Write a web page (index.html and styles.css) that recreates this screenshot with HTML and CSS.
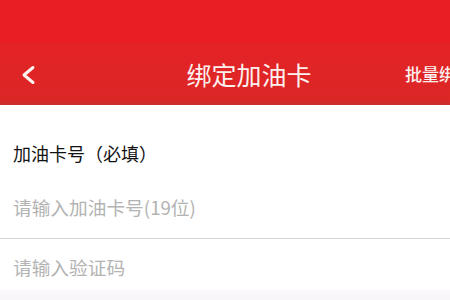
FILE: index.html
```html
<!DOCTYPE html>
<html lang="zh-CN">
<head>
<meta charset="utf-8">
<title>绑定加油卡</title>
<link rel="stylesheet" href="styles.css">
</head>
<body>
<div class="screen">
  <header class="header">
    <div class="status"></div>
    <nav class="nav">
      <div class="back">
        <svg width="16" height="20" viewBox="0 0 16 20" aria-hidden="true">
          <polyline points="13,2.5 4,10 13,17.5" fill="none" stroke="#fff3f0" stroke-width="3" stroke-linecap="round" stroke-linejoin="round"/>
        </svg>
      </div>
      <h1 class="title">绑定加油卡</h1>
      <div class="action">批量绑定</div>
    </nav>
  </header>
  <main class="form">
    <div class="label">加油卡号（必填）</div>
    <div class="field field-first">
      <span class="placeholder">请输入加油卡号(19位)</span>
    </div>
    <div class="field field-second">
      <span class="placeholder">请输入验证码</span>
    </div>
    <div class="footer-band"></div>
  </main>
</div>
</body>
</html>
```
FILE: styles.css
```css
html, body {
  margin: 0;
  padding: 0;
  overflow: hidden;
  background: #ffffff;
}
body {
  font-family: "Noto Sans CJK SC", "Noto Sans", sans-serif;
}
.screen {
  width: 498px;
}
.header {
  background: #e81e25;
}
.status {
  height: 43px;
  background: #e91d24;
}
.nav {
  height: 62px;
  display: grid;
  grid-template-columns: 1fr auto 1fr;
  align-items: center;
  background: linear-gradient(#e42326 0%, #dc2626 90%, #c9302b 100%);
}
.back {
  padding-left: 20px;
  display: flex;
  align-items: center;
  padding-top: 1px;
}
.title {
  margin: 0;
  font-size: 25px;
  font-weight: 400;
  line-height: 30px;
  color: #fdf0ee;
}
.action {
  justify-self: end;
  padding-right: 25px;
  font-size: 17px;
  line-height: 24px;
  font-weight: 500;
  color: #fdf0ee;
  white-space: nowrap;
}
.form {
  background: #fff;
}
.label {
  padding: 36px 0 12px 13px;
  font-size: 18px;
  line-height: 24px;
  font-weight: 400;
  color: #111111;
}
.field {
  box-sizing: border-box;
  display: flex;
  align-items: center;
  padding-left: 13px;
}
.field-first {
  height: 62px;
  border-bottom: 1px solid #d4d4d4;
  padding-bottom: 2px;
}
.field-second {
  height: 51px;
  padding-top: 4px;
}
.placeholder {
  font-size: 18.7px;
  line-height: 24px;
  color: #b3b3b3;
}
.footer-band {
  height: 20px;
  background: linear-gradient(#fbf8fb, #f7f3f8);
}
```
